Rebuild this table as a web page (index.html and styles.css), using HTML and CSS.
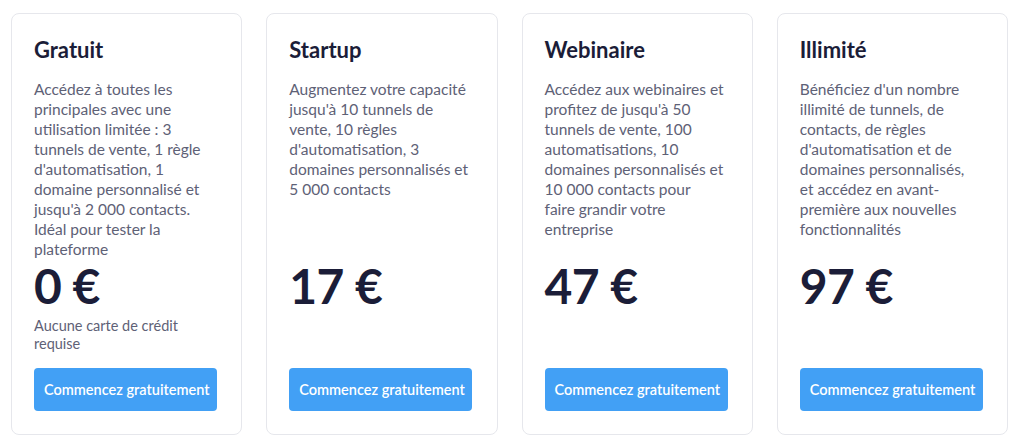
FILE: index.html
```html
<!DOCTYPE html>
<html lang="fr">
<head>
<meta charset="utf-8">
<title>Tarifs</title>
<link rel="stylesheet" href="styles.css">
</head>
<body>
<main class="plans">
  <section class="plan">
    <h2 class="plan-title">Gratuit</h2>
    <p class="plan-desc">Accédez à toutes les principales avec une utilisation limitée : 3 tunnels de vente, 1 règle d'automatisation, 1 domaine personnalisé et jusqu'à 2 000 contacts. Idéal pour tester la plateforme</p>
    <div class="plan-price">0 €</div>
    <p class="plan-note">Aucune carte de crédit requise</p>
    <div class="plan-action"><a class="btn" href="#">Commencez gratuitement</a></div>
  </section>
  <section class="plan">
    <h2 class="plan-title">Startup</h2>
    <p class="plan-desc">Augmentez votre capacité jusqu'à 10 tunnels de vente, 10 règles d'automatisation, 3 domaines personnalisés et 5 000 contacts</p>
    <div class="plan-price">17 €</div>
    <p class="plan-note"></p>
    <div class="plan-action"><a class="btn" href="#">Commencez gratuitement</a></div>
  </section>
  <section class="plan">
    <h2 class="plan-title">Webinaire</h2>
    <p class="plan-desc">Accédez aux webinaires et profitez de jusqu'à 50 tunnels de vente, 100 automatisations, 10 domaines personnalisés et 10 000 contacts pour<br>faire grandir votre entreprise</p>
    <div class="plan-price">47 €</div>
    <p class="plan-note"></p>
    <div class="plan-action"><a class="btn" href="#">Commencez gratuitement</a></div>
  </section>
  <section class="plan">
    <h2 class="plan-title">Illimité</h2>
    <p class="plan-desc">Bénéficiez d'un nombre illimité de tunnels, de contacts, de règles d'automatisation et de domaines personnalisés,<br>et accédez en avant-première aux nouvelles fonctionnalités</p>
    <div class="plan-price">97 €</div>
    <p class="plan-note"></p>
    <div class="plan-action"><a class="btn" href="#">Commencez gratuitement</a></div>
  </section>
</main>
</body>
</html>
```
FILE: styles.css
```css
* { box-sizing: border-box; }
html, body { margin: 0; padding: 0; background: #ffffff; }
body {
  font-family: "Lato", "Noto Sans", sans-serif;
  color: #5e6176;
}
.plans {
  display: grid;
  grid-template-columns: repeat(4, 1fr);
  grid-template-rows: auto auto auto auto 1fr;
  column-gap: 24px;
  width: 997px;
  margin: 13px 0 0 11px;
  height: 422px;
}
.plan {
  grid-row: span 5;
  display: grid;
  grid-template-rows: subgrid;
  border: 1px solid #e6e7ec;
  border-radius: 8px;
  padding: 22px 22px 23px 22px;
  background: #fff;
}
.plan-title {
  margin: 0;
  font-size: 22px;
  line-height: 28px;
  font-weight: 700;
  color: #1b1d38;
}
.plan-desc {
  margin: 15px 0 0;
  font-size: 15.5px;
  line-height: 20px;
  color: #5e6176;
}
.plan-price {
  font-size: 48px;
  line-height: 54px;
  font-weight: 700;
  color: #1b1d38;
  letter-spacing: -0.5px;
}
.plan-note {
  margin: 4px 0 0;
  font-size: 14.5px;
  line-height: 18px;
  color: #5e6176;
}
.plan-action {
  display: flex;
  align-items: flex-end;
}
.btn {
  display: inline-block;
  background: #42a0f5;
  color: #fff;
  text-decoration: none;
  font-size: 14.5px;
  font-weight: 600;
  line-height: 43px;
  height: 43px;
  padding: 0 10px;
  width: 183px;
  text-align: center;
  border-radius: 4px;
  white-space: nowrap;
}
```
